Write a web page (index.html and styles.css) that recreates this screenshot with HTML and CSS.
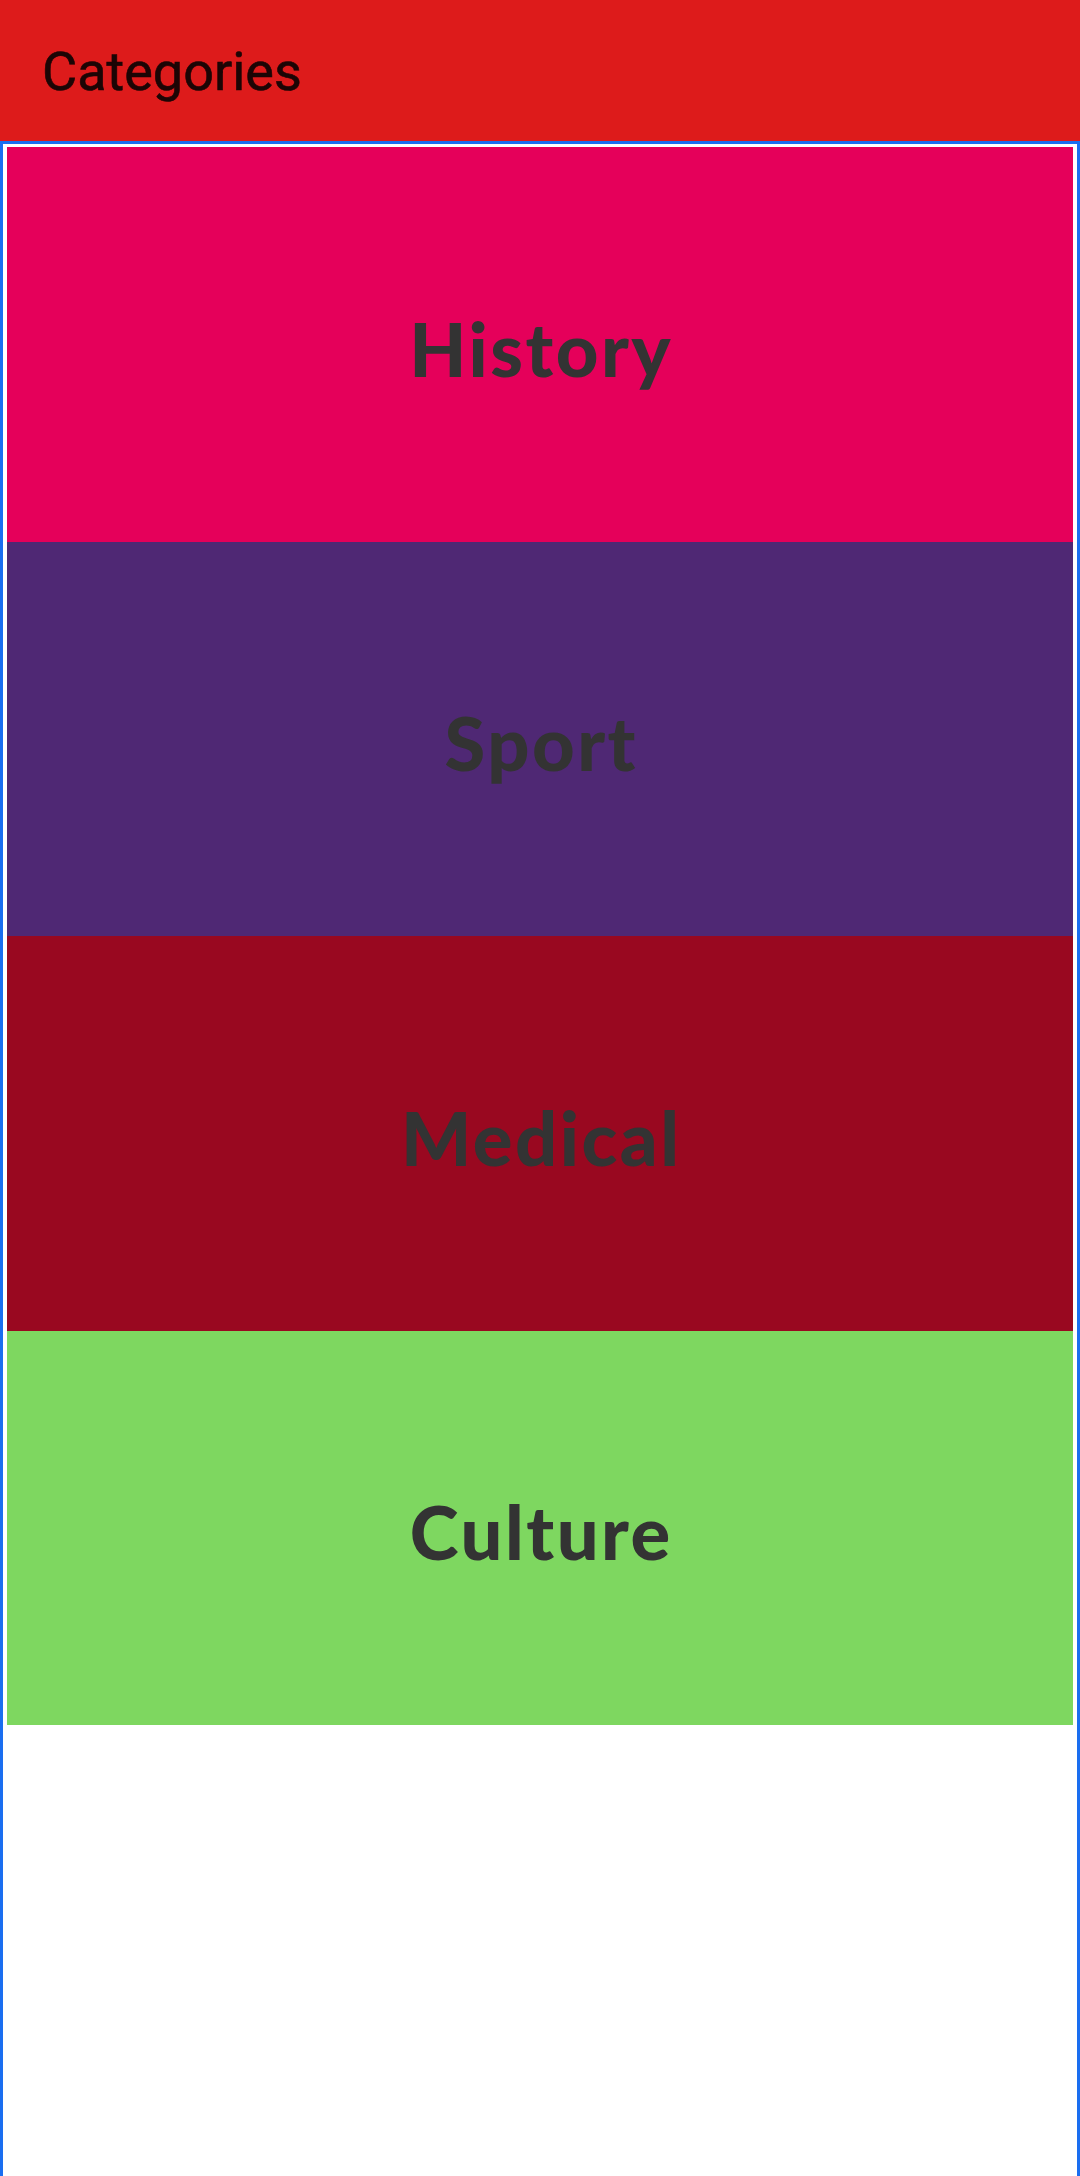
FILE: index.html
```html
<!DOCTYPE html>
<html>
<head>
<meta charset="utf-8">
<link rel="stylesheet" href="styles.css">
</head>
<body>
<header class="appbar"><h1 class="title">Categories</h1></header>
<main class="list">
  <div class="tile history"><span class="label">History</span></div>
  <div class="tile sport"><span class="label">Sport</span></div>
  <div class="tile medical"><span class="label">Medical</span></div>
  <div class="tile culture"><span class="label">Culture</span></div>
</main>
</body>
</html>
```
FILE: styles.css
```css
html, body { margin: 0; padding: 0; background: #fff; }
body { width: 1080px; height: 2176px; overflow: hidden; }
.appbar {
  height: 141px;
  background: #dd1b1b;
  display: flex;
  align-items: center;
  padding-left: 42px;
  box-sizing: border-box;
}
.title {
  margin: 0;
  font-family: Roboto, "Noto Sans", sans-serif;
  font-weight: 400;
  font-size: 54px;
  color: #1c0505;
  padding-top: 2px;
  -webkit-text-stroke: 0.6px #1c0505;
}
.list {
  height: 2035px;
  box-sizing: border-box;
  border: 3px solid #1a6ef0;
  border-bottom: none;
  padding: 3px 4px 0 4px;
  display: flex;
  flex-direction: column;
}
.tile {
  height: 394.5px;
  flex: none;
  display: flex;
  align-items: center;
  justify-content: center;
}
.label {
  font-family: Lato, "Open Sans", sans-serif;
  font-weight: 900;
  font-size: 74px;
  color: #333333;
  letter-spacing: 2.5px;
  padding-top: 8px;
  padding-left: 2.5px;
}
.history { background: #e5005a; }
.sport { background: #4f2874; }
.medical { background: #990820; }
.culture { background: #7ed760; }
```
